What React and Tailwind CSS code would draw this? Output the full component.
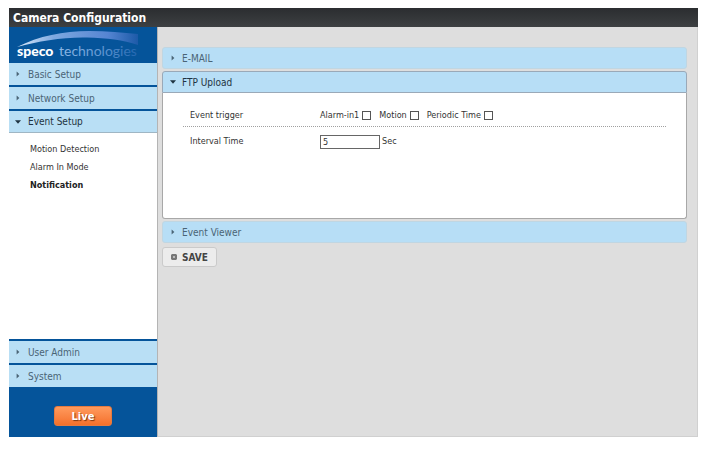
import React, { useState } from 'react';

const subMenu = ['Motion Detection', 'Alarm In Mode', 'Notification'];
const triggers = ['Alarm-in1', 'Motion', 'Periodic Time'];

const Arrow = ({ open }) => (
  <svg viewBox="0 0 6 6" className="h-[6px] w-[6px] shrink-0 fill-current">
    {open ? <path d="M0 1.2h6L3 4.8z" /> : <path d="M1.6 0.4v5.2L4.4 3z" />}
  </svg>
);

const Logo = () => (
  <svg viewBox="0 0 148 36" className="block h-[36px] w-[148px]" role="img" aria-label="speco technologies">
    <defs>
      <linearGradient id="swoosh" x1="0" x2="1" y1="0" y2="0">
        <stop offset="0" stopColor="#dbe9fa" />
        <stop offset="0.3" stopColor="#7fa9e0" />
        <stop offset="0.75" stopColor="#5585d2" />
        <stop offset="1" stopColor="#1c5aa8" />
      </linearGradient>
      <linearGradient id="tech" x1="0" x2="1" y1="0" y2="0">
        <stop offset="0" stopColor="#8fb9e6" />
        <stop offset="0.6" stopColor="#5d93cf" />
        <stop offset="1" stopColor="#2467b0" />
      </linearGradient>
    </defs>
    <path d="M8 20C30 9 54 4 80 4c18 0 34 1.500 49 3v11C114 13 98 11 78 10.500 54 10 30 14 8 20z" fill="url(#swoosh)" />
    <text x="8" y="29" fill="#ffffff" className="font-['Lato',sans-serif] text-[14px] font-black">speco</text>
    <text x="50" y="29" fill="url(#tech)" className="font-['Lato',sans-serif] text-[14px]">technologies</text>
  </svg>
);

const MenuItem = ({ label, open }) => (
  <button
    type="button"
    className={`flex h-[22px] w-full items-center gap-[7px] bg-[#b9dff5] pl-[6px] text-left text-[10px] ${
      open ? 'border-b border-[#9fb6c4] text-[#1f3442]' : 'text-[#4a6475]'
    }`}
  >
    <Arrow open={open} />
    {label}
  </button>
);

const SectionBar = ({ label, open }) => (
  <button
    type="button"
    className={`flex h-[22px] w-full items-center gap-[6px] bg-[#b7def6] pl-[7px] text-left text-[10px] ${
      open
        ? 'rounded-t-[3px] border border-[#9aa9b8] text-[#1f3442]'
        : 'rounded-[3px] border border-[#c0d6e2] text-[#4a6475]'
    }`}
  >
    <Arrow open={open} />
    {label}
  </button>
);

const App = () => {
  const [active, setActive] = useState('Notification');
  const [interval, setIntervalTime] = useState('5');

  return (
    <div className="flex min-h-screen flex-col bg-white px-[9px] pt-[8px] pb-[12px] font-['DejaVu_Sans_Condensed','DejaVu_Sans',sans-serif] text-[9px] text-[#333333]">
      <header className="flex h-[19px] items-center bg-linear-to-b from-[#2b2d30] to-[#3d4042] pl-[4px]">
        <h1 className="text-[12px] font-bold text-white">Camera Configuration</h1>
      </header>

      <div className="flex flex-1">
        <aside className="flex w-[148px] shrink-0 flex-col bg-[#05549a]">
          <Logo />
          <nav className="flex flex-1 flex-col gap-[2px]">
            <MenuItem label="Basic Setup" />
            <MenuItem label="Network Setup" />
            <div className="flex flex-1 flex-col bg-white">
              <MenuItem label="Event Setup" open />
              <ul className="px-[21px] pt-[8px]">
                {subMenu.map((item) => (
                  <li key={item}>
                    <button
                      type="button"
                      onClick={() => setActive(item)}
                      className={`block h-[18px] text-left ${item === active ? 'font-bold text-[#222222]' : ''}`}
                    >
                      {item}
                    </button>
                  </li>
                ))}
              </ul>
            </div>
            <MenuItem label="User Admin" />
            <MenuItem label="System" />
          </nav>
          <div className="flex h-[50px] items-start justify-center pt-[19px]">
            <button
              type="button"
              className="h-[20px] w-[58px] rounded-[3px] border border-[#e57a40] bg-linear-to-b from-[#ff9a5c] to-[#f4702a] text-[11px] leading-none font-bold text-white text-shadow-[1px_1px_1px_#7a3510]"
            >
              Live
            </button>
          </div>
        </aside>

        <main className="flex-1 border-r border-b border-l border-[#d0d0d0] border-l-[#b4b4b4] bg-[#dedede] pt-[20px] pr-[10px] pl-[4px]">
          <div className="flex flex-col gap-[2px]">
            <SectionBar label="E-MAIL" />
            <section>
              <SectionBar label="FTP Upload" open />
              <div className="min-h-[126px] rounded-b-[3px] border border-t-0 border-[#a8a8a8] bg-white px-[20px] pt-[12px]">
                <div className="flex h-[22px] items-center border-b border-dotted border-[#a0a0a0] pl-[7px]">
                  <span className="w-[130px]">Event trigger</span>
                  <div className="flex gap-[8px]">
                    {triggers.map((name) => (
                      <label key={name} className="flex items-center gap-[3px]">
                        {name}
                        <input
                          type="checkbox"
                          className="h-[9px] w-[9px] appearance-none border border-[#555555] bg-white checked:bg-[#555555]"
                        />
                      </label>
                    ))}
                  </div>
                </div>
                <div className="flex h-[30px] items-center pl-[7px]">
                  <label htmlFor="interval" className="w-[130px]">Interval Time</label>
                  <input
                    id="interval"
                    type="text"
                    value={interval}
                    onChange={(e) => setIntervalTime(e.target.value)}
                    className="mr-[2px] h-[14px] w-[60px] border border-[#666666] bg-white px-[2px]"
                  />
                  <span>Sec</span>
                </div>
              </div>
            </section>
            <SectionBar label="Event Viewer" />
          </div>
          <button
            type="button"
            className="mt-[4px] flex h-[20px] w-[55px] items-center gap-[5px] rounded-[3px] border border-[#cacaca] bg-[#ececec] pl-[8px] text-[10px] font-bold text-[#444444]"
          >
            <svg viewBox="0 0 6 6" className="h-[6px] w-[6px] shrink-0">
              <path d="M1 0h4l1 1v4L5 6H1L0 5V1z" fill="#777777" />
              <path d="M2 2h2v2H2z" fill="#bbbbbb" />
            </svg>
            SAVE
          </button>
        </main>
      </div>
    </div>
  );
};

export default App;
